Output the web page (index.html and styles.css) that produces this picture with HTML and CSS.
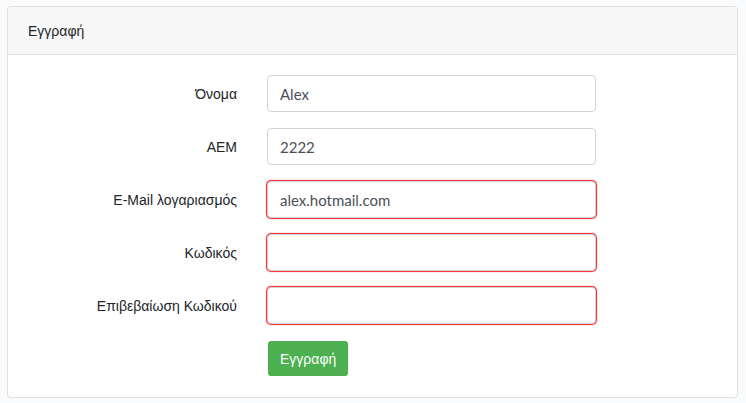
FILE: index.html
```html
<!DOCTYPE html>
<html lang="el">
<head>
<meta charset="utf-8">
<title>Εγγραφή</title>
<link rel="stylesheet" href="styles.css">
</head>
<body>
<main class="card">
  <h1 class="card-header">Εγγραφή</h1>
  <form class="card-body" novalidate>
    <label class="label" for="name">Όνομα</label>
    <input class="input" id="name" type="text" value="Alex">
    <label class="label" for="aem">ΑΕΜ</label>
    <input class="input" id="aem" type="text" value="2222">
    <label class="label" for="email">E-Mail λογαριασμός</label>
    <input class="input invalid" id="email" type="text" inputmode="email" value="alex.hotmail.com">
    <label class="label" for="password">Κωδικός</label>
    <input class="input invalid" id="password" type="password">
    <label class="label" for="confirm">Επιβεβαίωση Κωδικού</label>
    <input class="input invalid" id="confirm" type="password">
    <button class="button" type="submit">Εγγραφή</button>
  </form>
</main>
</body>
</html>
```
FILE: styles.css
```css
* {
  box-sizing: border-box;
}

body {
  margin: 0;
  padding: 6px 8px 5px 7px;
  background: #f8fafc;
  color: #212529;
  font: 14px/22px "Liberation Sans", Arial, sans-serif;
}

.card {
  background: #fff;
  border: 1px solid #dfdfdf;
  border-radius: 4px;
}

.card-header {
  margin: 0;
  padding: 13px 20px 12px;
  border-bottom: 1px solid #dfdfdf;
  border-radius: 3px 3px 0 0;
  background: #f7f7f7;
  font-size: 14px;
  font-weight: 400;
}

.card-body {
  display: grid;
  grid-template-columns: 33.3333% 50%;
  row-gap: 16px;
  padding: 20px 5px 20px 4px;
}

.label {
  padding: 8px 15px 7px;
  text-align: right;
}

.input {
  width: calc(100% - 31px);
  height: 37px;
  margin: 0 15px;
  padding: 6px 12px;
  border: 1px solid #ced4da;
  border-radius: 4px;
  background: #fff;
  color: #495057;
  font: 15px/24px Lato, "Open Sans", sans-serif;
}

.invalid {
  box-shadow: 0 0 1px 1px #ff2020;
}

.button {
  grid-column: 2;
  justify-self: start;
  height: 35px;
  margin: 1px 16px;
  padding: 7px 12px 6px;
  border: 0;
  border-radius: 3px;
  background: #4caf50;
  color: #fff;
  font: inherit;
}
```
